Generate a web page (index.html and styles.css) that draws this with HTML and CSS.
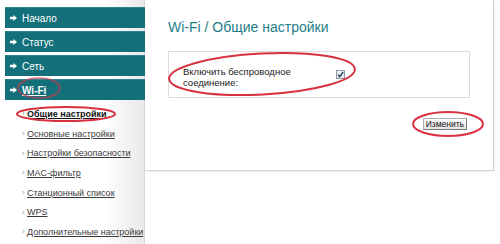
FILE: index.html
```html
<!DOCTYPE html>
<html lang="ru">
<head>
<meta charset="utf-8">
<title>Wi-Fi / Общие настройки</title>
<link rel="stylesheet" href="styles.css">
</head>
<body>
<div class="page">
  <aside class="sidebar">
    <ul class="menu">
      <li class="menu-item"><svg class="arrow" viewBox="0 0 7 6" width="7" height="6"><polygon points="0,1.8 3.4,1.8 3.4,0 7,3 3.4,6 3.4,4.2 0,4.2" fill="#fff"/></svg><span>Начало</span></li>
      <li class="menu-item"><svg class="arrow" viewBox="0 0 7 6" width="7" height="6"><polygon points="0,1.8 3.4,1.8 3.4,0 7,3 3.4,6 3.4,4.2 0,4.2" fill="#fff"/></svg><span>Статус</span></li>
      <li class="menu-item"><svg class="arrow" viewBox="0 0 7 6" width="7" height="6"><polygon points="0,1.8 3.4,1.8 3.4,0 7,3 3.4,6 3.4,4.2 0,4.2" fill="#fff"/></svg><span>Сеть</span></li>
      <li class="menu-item active"><svg class="arrow" viewBox="0 0 7 6" width="7" height="6"><polygon points="0,1.8 3.4,1.8 3.4,0 7,3 3.4,6 3.4,4.2 0,4.2" fill="#fff"/></svg><span>Wi-Fi</span></li>
    </ul>
    <ul class="submenu">
      <li class="sub-item current"><span class="bullet">›</span><a>Общие настройки</a></li>
      <li class="sub-item"><span class="bullet">›</span><a>Основные настройки</a></li>
      <li class="sub-item"><span class="bullet">›</span><a>Настройки безопасности</a></li>
      <li class="sub-item"><span class="bullet">›</span><a>MAC-фильтр</a></li>
      <li class="sub-item"><span class="bullet">›</span><a>Станционный список</a></li>
      <li class="sub-item"><span class="bullet">›</span><a>WPS</a></li>
      <li class="sub-item"><span class="bullet">›</span><a>Дополнительные настройки</a></li>
    </ul>
  </aside>
  <main class="panel">
    <h1 class="title">Wi-Fi / Общие настройки</h1>
    <div class="fieldbox">
      <div class="label"><span class="label-text">Включить беспроводное соединение:</span></div>
      <span class="checkbox"><svg viewBox="0 0 9 9" width="9" height="9"><path d="M2 4.6 L3.8 6.6 L7.2 1.8" fill="none" stroke="#23345e" stroke-width="1.3"/></svg></span>
    </div>
    <div class="actions">
      <button class="btn">Изменить</button>
    </div>
  </main>
  <svg class="annot" viewBox="0 0 500 244" width="500" height="244">
    <ellipse cx="39" cy="88" rx="21" ry="10" fill="none" stroke="#c8384e" stroke-opacity="0.75" stroke-width="1.6"/>
    <ellipse cx="66" cy="114" rx="49" ry="7" fill="none" stroke="#d8323f" stroke-width="2"/>
    <ellipse cx="262" cy="74" rx="93" ry="20.5" transform="rotate(-3 262 74)" fill="none" stroke="#d8323f" stroke-width="2"/>
    <ellipse cx="448" cy="124" rx="35" ry="12" fill="none" stroke="#d8323f" stroke-width="2"/>
  </svg>
</div>
</body>
</html>
```
FILE: styles.css
```css
* { box-sizing: border-box; }
html, body { margin: 0; padding: 0; background: #fff; }
body { font-family: "Liberation Sans", Arial, sans-serif; }

.page {
  position: relative;
  width: 500px;
  height: 244px;
  overflow: hidden;
  display: flex;
  align-items: flex-start;
}

.sidebar {
  flex: none;
  width: 145px;
  height: 244px;
  padding-top: 7px;
  padding-left: 5px;
  background: linear-gradient(to right, #ffffff 0%, #ffffff 72%, #e9e9e9 100%);
  border-right: 1px solid #d6d6d6;
}

.menu, .submenu { list-style: none; margin: 0; padding: 0; }

.menu {
  display: flex;
  flex-direction: column;
  gap: 3px;
  margin-right: -1px;
}

.menu-item {
  height: 21px;
  display: flex;
  align-items: center;
  gap: 5px;
  padding-left: 5px;
  background: #13707b;
  border-top: 1px solid #2a8590;
  color: #fff;
  font-size: 10px;
}

.menu-item.active span {
  font-weight: bold;
  text-decoration: underline;
}

.arrow { flex: none; }

.submenu {
  margin-top: 4px;
  padding-left: 17px;
}

.sub-item {
  height: 19.7px;
  display: flex;
  align-items: center;
  font-size: 9px;
  color: #333;
}

.bullet {
  color: #9a9a9a;
  font-size: 8px;
  width: 5px;
}

.sub-item a {
  color: #3a3a3a;
  text-decoration: underline;
}

.sub-item.current a {
  color: #111;
  font-weight: bold;
}

.panel {
  flex: none;
  width: 349px;
  height: 171px;
  border-right: 1px solid #d2d2d2;
  border-bottom: 1px solid #d2d2d2;
  box-shadow: 1px 1px 2px rgba(0,0,0,0.06);
  padding-top: 19px;
}

.title {
  margin: 0 0 0 23px;
  font-weight: normal;
  font-size: 14px;
  line-height: 16px;
  color: #1f7d88;
}

.fieldbox {
  margin: 16px 0 0 23px;
  width: 302px;
  height: 47px;
  border: 1px solid #dcdcdc;
  display: flex;
  align-items: center;
  padding-left: 14px;
}

.label {
  flex: none;
  width: 153px;
  font-size: 9.5px;
  line-height: 11px;
  color: #222;
  margin-top: 5px;
}

.label-text {
  display: block;
  width: 118px;
}

.checkbox {
  flex: none;
  width: 9px;
  height: 9px;
  border: 1px solid #8e9aa6;
  background: linear-gradient(#f4f6f8, #dfe4ea);
  display: flex;
  align-items: center;
  justify-content: center;
}
.checkbox svg { display: block; flex: none; }

.actions {
  margin-top: 20px;
  display: flex;
  justify-content: flex-end;
  padding-right: 26px;
}

.btn {
  height: 12px;
  padding: 0 2px;
  font-family: "Liberation Sans", Arial, sans-serif;
  font-size: 8.5px;
  line-height: 10px;
  color: #111;
  background: linear-gradient(#ffffff, #e4e4e4);
  border: 1px solid #b0b0b0;
  border-right-color: #777;
  border-bottom-color: #777;
  border-radius: 0;
}

.annot {
  position: absolute;
  left: 0;
  top: 0;
  pointer-events: none;
}
```
